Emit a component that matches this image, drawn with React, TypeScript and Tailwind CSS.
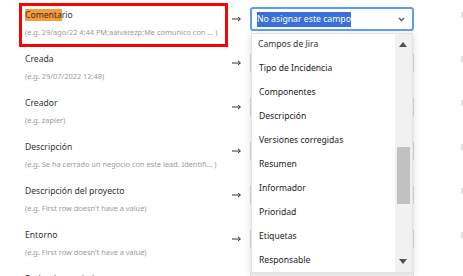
import React from 'react';

interface FieldRow {
  label: string;
  example: string;
}

const rows: FieldRow[] = [
  { label: 'Comentario', example: '(e.g. 29/ago/22 4:44 PM;aalvarezp;Me comunico con ... )' },
  { label: 'Creada', example: '(e.g. 29/07/2022 12:48)' },
  { label: 'Creador', example: '(e.g. zapier)' },
  { label: 'Descripción', example: '(e.g. Se ha cerrado un negocio con este lead. Identifi... )' },
  { label: 'Descripción del proyecto', example: "(e.g. First row doesn't have a value)" },
  { label: 'Entorno', example: "(e.g. First row doesn't have a value)" },
  { label: 'Fecha de vencimiento', example: "(e.g. First row doesn't have a value)" },
];

const options = [
  'Tipo de Incidencia',
  'Componentes',
  'Descripción',
  'Versiones corregidas',
  'Resumen',
  'Informador',
  'Prioridad',
  'Etiquetas',
  'Responsable',
];

const Arrow = () => (
  <svg width="9" height="6" viewBox="0 0 9 6" className="text-[#333]">
    <path d="M0 3H8.2M6 1L8.4 3L6 5" fill="none" stroke="currentColor" strokeWidth="1" />
  </svg>
);

const App: React.FC = () => {
  return (
    <div
      className="relative w-[463px] h-[276px] overflow-hidden bg-white text-[#333]"
      style={{ fontFamily: '"Noto Sans", "Open Sans", sans-serif' }}
    >
      <div className="flex flex-col pt-[3px] pl-[19px]">
        {rows.map((row, i) => (
          <div key={row.label} className="flex items-start h-[44px] shrink-0">
            <div
              className={`w-[209px] h-[44px] shrink-0 border-[3px] pl-[3px] pt-[3px] ${
                i === 0 ? 'border-[#ff0000]' : 'border-transparent'
              }`}
            >
              <div className="text-[8.6px] leading-[12px] text-[#333] whitespace-nowrap">
                {i === 0 ? (
                  <>
                    <span className="bg-[#f8993a]">Comenta</span>rio
                  </>
                ) : (
                  row.label
                )}
              </div>
              <div className="mt-[6px] text-[7.4px] leading-[10px] text-[#9b9b9b] whitespace-nowrap">
                {row.example}
              </div>
            </div>
            <div className="mt-[4px] h-[24px] flex items-center ml-[4px]">
              <Arrow />
            </div>
            {i === 0 ? (
              <div className="mt-[4px] ml-[9px] w-[164px] h-[24px] shrink-0 border-2 border-[#5b9df5] rounded-[3px] flex items-center justify-between pl-[5px] pr-[7px]">
                <span className="bg-[#3a6fd8] text-white text-[8.7px] leading-[15px] whitespace-nowrap">
                  No asignar este campo
                </span>
                <svg width="7" height="5" viewBox="0 0 7 5">
                  <path d="M1 1L3.5 3.5L6 1" fill="none" stroke="#555" strokeWidth="1.3" />
                </svg>
              </div>
            ) : (
              <div className="mt-[5px] ml-[9px] w-[164px] h-[22px] shrink-0 border border-[#dcdcdc] rounded-[3px]" />
            )}
            <div className="mt-[9px] ml-[47px] w-[10px] h-[6px] shrink-0 bg-[#e2e2e2]" />
          </div>
        ))}
      </div>

      {/* open dropdown list */}
      <div className="absolute left-[251px] top-[33px] w-[162px] h-[240px] bg-white border border-[#e4e4e4] shadow-[0_2px_6px_rgba(0,0,0,0.18)] overflow-hidden">
        <div className="flex flex-col">
          <div className="h-[24px] pb-[4px] flex items-center pl-[6px] text-[8.6px] text-[#333] whitespace-nowrap">
            Campos de Jira
          </div>
          {options.map((opt) => (
            <div
              key={opt}
              className="h-[24px] pb-[4px] flex items-center pl-[7px] text-[8.6px] text-[#222] whitespace-nowrap"
            >
              {opt}
            </div>
          ))}
        </div>
        <div className="absolute right-0 top-0 bottom-0 w-[17px] bg-[#f1f1f1]">
          <svg width="8" height="5" viewBox="0 0 8 5" className="absolute left-[4px] top-[8px]">
            <path d="M0 5L4 0L8 5Z" fill="#505050" />
          </svg>
          <div className="absolute left-[2px] top-[113px] w-[13px] h-[57px] bg-[#c1c1c1]" />
          <svg width="8" height="5" viewBox="0 0 8 5" className="absolute left-[4px] bottom-[8px]">
            <path d="M0 0L8 0L4 5Z" fill="#505050" />
          </svg>
        </div>
      </div>
    </div>
  );
};

export default App;
